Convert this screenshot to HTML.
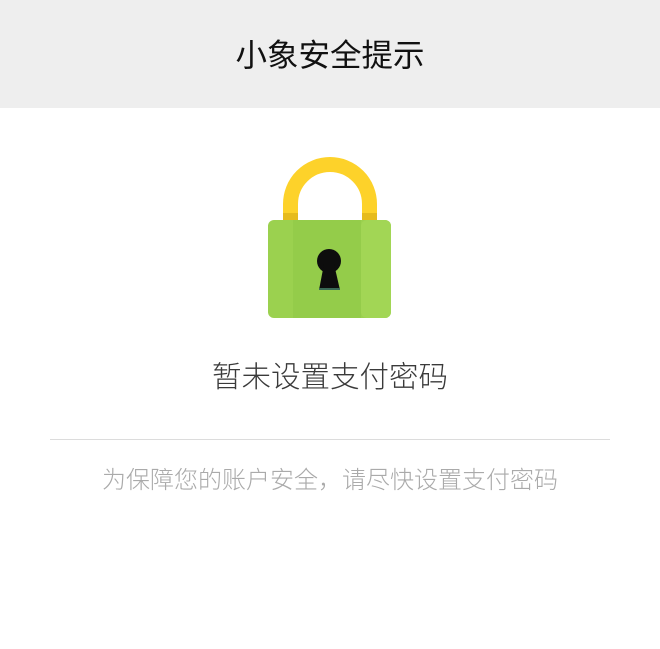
<!DOCTYPE html>
<html><head><meta charset="utf-8"><style>
html,body{margin:0;padding:0;width:660px;height:649px;background:#fff;overflow:hidden;font-family:"Liberation Sans","Noto Sans CJK SC",sans-serif;}
.hd{position:absolute;left:0;top:0;width:660px;height:108px;background:#eeeeee;text-align:center;line-height:110px;font-size:31.5px;color:#111;font-weight:400;}
.t1{position:absolute;left:0;width:660px;top:357px;text-align:center;font-size:29.5px;line-height:42px;color:#3a3a3a;font-weight:300;}
.ln{position:absolute;left:50px;width:560px;top:439px;height:1px;background:#dcdcdc;}
.t2{position:absolute;left:0;width:660px;top:464px;text-align:center;font-size:24px;line-height:34px;color:#aaa;font-weight:300;}
svg{position:absolute;left:0;top:0}
</style></head><body>
<div class="hd">小象安全提示</div>
<svg width="660" height="340">
<path d="M290.5 222 V204 A39.5 39.5 0 0 1 369.5 204 V222" fill="none" stroke="#fdd22a" stroke-width="15"/>
<rect x="283" y="213" width="15" height="8" fill="#e6bb1e"/>
<rect x="362" y="213" width="15" height="8" fill="#e6bb1e"/>
<rect x="268" y="220" width="123" height="98" rx="6" fill="#9bd14f"/>
<rect x="293" y="220" width="68" height="98" fill="#94cc4a"/>
<rect x="361" y="220" width="30" height="98" rx="6" fill="#a2d655"/>
<circle cx="329" cy="261" r="12" fill="#0d0d0d"/>
<path d="M324 264 L319 290 H340 L334 264 Z" fill="#0d0d0d"/>
<rect x="319" y="288" width="21" height="2" fill="#3a6b55"/>
</svg>
<div class="t1">暂未设置支付密码</div>
<div class="ln"></div>
<div class="t2">为保障您的账户安全，请尽快设置支付密码</div>
</body></html>
